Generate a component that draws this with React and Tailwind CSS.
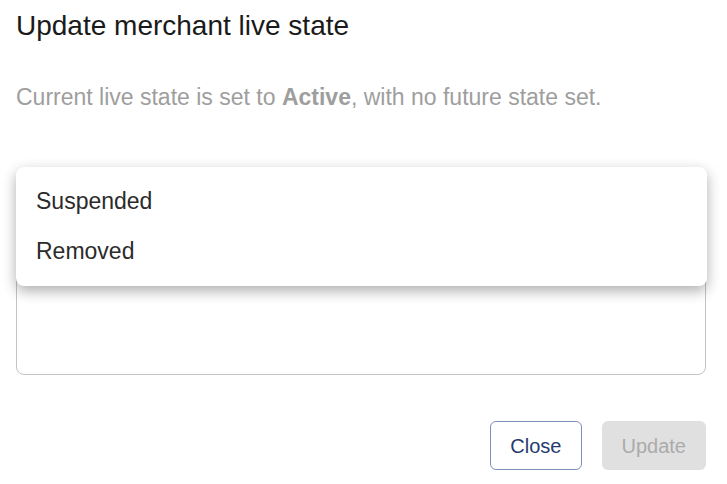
import React from 'react';

const App = () => {
  return (
    <div className="relative w-[727px] h-[484px] bg-white font-['Liberation_Sans',Arial,sans-serif] overflow-hidden">
      <div className="pl-4 pr-[21px] pt-[8px]">
        <h2 className="text-[28px] leading-[36px] text-[#1a1a1a]">Update merchant live state</h2>
        <p className="mt-[39px] text-[23px] leading-[28px] text-[#9e9e9e]">
          Current live state is set to <b className="font-bold">Active</b>, with no future state set.
        </p>

        {/* Select field (covered by the open menu) */}
        <div className="mt-[61px] h-[56px] border border-[#c4c4c4] rounded-lg" />

        <textarea
          className="mt-[16px] block w-full h-[131px] border border-[#c4c4c4] rounded-lg px-4 pt-[15px] text-[20px] leading-[28px] text-[#555] resize-none outline-none placeholder:text-[#555]"
          placeholder="Reason for the change (optional) and any notes"
        />

        <div className="flex justify-end gap-5 mt-[46px]">
          <button className="h-[49px] px-[19px] border border-[#7f8fb8] rounded-md text-[20px] text-[#263a70] bg-white">
            Close
          </button>
          <button disabled className="h-[49px] px-5 rounded-md text-[20px] text-[#ababab] bg-[#e0e0e0]">
            Update
          </button>
        </div>
      </div>

      {/* Open dropdown menu */}
      <div className="absolute left-4 top-[167px] w-[691px] bg-white rounded-lg shadow-[0_5px_14px_rgba(0,0,0,0.32)] pt-[9px] pb-[10px]">
        <div className="h-[50px] flex items-center px-5 text-[23px] text-[#2b2b2b]">Suspended</div>
        <div className="h-[50px] flex items-center px-5 text-[23px] text-[#2b2b2b]">Removed</div>
      </div>
    </div>
  );
};

export default App;
